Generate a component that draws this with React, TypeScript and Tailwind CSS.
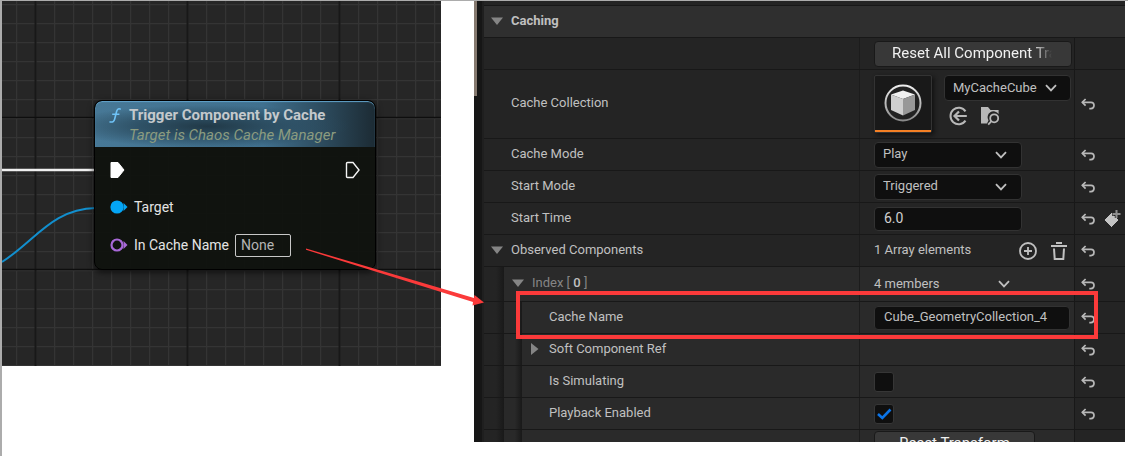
import type { ReactNode } from "react";

function UndoIcon() {
  return (
    <svg width="14" height="12" viewBox="0 0 14 12" fill="none" stroke="#b8b8b8" strokeWidth="1.7">
      <path d="M1 4.3H10C12 4.3 13 5.4 13 7.3C13 9.4 12 10.6 10 10.6H8.3" />
      <path d="M4.6 1L1.3 4.3L4.6 7.6" />
    </svg>
  );
}

function Chevron() {
  return (
    <svg className="pointer-events-none" width="12" height="8" viewBox="0 0 12 8" fill="none" stroke="#c0c0c0" strokeWidth="1.8">
      <path d="M1 1.2L6 6.4L11 1.2" />
    </svg>
  );
}

function Triangle({ open }: { open: boolean }) {
  return open ? (
    <svg width="12" height="8" viewBox="0 0 12 8" fill="#858585">
      <path d="M0 0.5H12L6 8Z" />
    </svg>
  ) : (
    <svg width="12" height="12" viewBox="0 0 12 12" fill="#858585">
      <path d="M2 0L9.5 6L2 12Z" />
    </svg>
  );
}

function ResetButton({ label }: { label: string }) {
  return (
    <button type="button" aria-label={`Reset ${label}`} className="pl-[6px]">
      <UndoIcon />
    </button>
  );
}

type RowProps = {
  name?: ReactNode;
  label?: string;
  children?: ReactNode;
  depth?: 0 | 1 | 2;
  open?: boolean;
  reset?: boolean;
  extra?: ReactNode;
  height?: string;
};

function Row({ name, label, children, depth = 0, open, reset = true, extra, height = "h-8" }: RowProps) {
  return (
    <div
      className={`${height} grid grid-cols-[minmax(0,1fr)_215px_50px] border-b border-[#181818] ${
        depth === 0 ? "bg-[#242424]" : "bg-[#2a2a2a]"
      }`}
    >
      <div className="flex min-w-0 border-r border-[#1c1c1c]">
        {depth > 0 && <div className="w-5 shrink-0 bg-linear-to-r from-[#242424] from-60% to-[#191919]" />}
        {depth > 1 && <div className="w-[18px] shrink-0 bg-linear-to-r from-[#292929] from-60% to-[#191919]" />}
        <div className={`flex items-center gap-2 pb-[2px] ${depth === 1 ? "pl-2" : "pl-[7px]"}`}>
          <span className="flex w-3 shrink-0 justify-center">{open !== undefined && <Triangle open={open} />}</span>
          {name}
        </div>
      </div>
      <div className="flex min-w-0 items-center border-r border-[#181818] pl-[14px]">{children}</div>
      <div className="flex items-center gap-2 bg-[#242424]">
        {reset && label && <ResetButton label={label} />}
        {extra}
      </div>
    </div>
  );
}

function Dropdown({ id, value, width, pad }: { id: string; value: string; width: string; pad: string }) {
  return (
    <div className={`relative flex h-[26px] items-center ${width}`}>
      <select
        id={id}
        defaultValue={value}
        className="h-full w-full appearance-none rounded-[4px] border border-[#323232] bg-[#0f0f0f] px-2 pb-px text-[13px] text-[#c0c0c0]"
      >
        <option>{value}</option>
      </select>
      <span className={`pointer-events-none absolute ${pad}`}>
        <Chevron />
      </span>
    </div>
  );
}

function CubeThumbnail() {
  return (
    <div className="flex h-[58px] w-[58px] flex-col items-center rounded-[2px] border border-[#333333] bg-[#191919] shadow-[2px_2px_4px_#111111]">
      <div className="flex flex-1 items-center">
        <svg width="40" height="40" viewBox="0 0 40 40">
          <defs>
            <linearGradient id="ring" x1="0" y1="0" x2="0" y2="1">
              <stop offset="0" stopColor="#eeeeee" />
              <stop offset="1" stopColor="#8a8a8a" />
            </linearGradient>
          </defs>
          <circle cx="20" cy="20" r="17.5" fill="#222222" stroke="url(#ring)" strokeWidth="2" />
          <path d="M20 7.5L32 11.5L20 16L8 11.5Z" fill="#f1f1f1" />
          <path d="M8 11.5L20 16V32.5L8 27Z" fill="#cfcfcf" />
          <path d="M32 11.5L20 16V32.5L32 27Z" fill="#989898" />
        </svg>
      </div>
      <div className="h-[2px] w-full bg-[#f58025]" />
    </div>
  );
}

function UseSelectedIcon() {
  return (
    <svg width="20" height="20" viewBox="0 0 20 20" fill="none" stroke="#b8b8b8" strokeWidth="2">
      <path d="M17.5 5.4A8.2 8.2 0 1 0 17.5 14.6" />
      <path d="M18.8 10H6.5M11 5.5L6.5 10L11 14.5" strokeWidth="2.2" />
    </svg>
  );
}

function BrowseIcon() {
  return (
    <svg width="20" height="20" viewBox="0 0 20 20">
      <path d="M1 1H8L10.5 4H18.6V8A6 6 0 0 0 8.5 14.5L7 17.5H1Z" fill="#b8b8b8" />
      <circle cx="14.2" cy="12.3" r="4" fill="#242424" stroke="#b8b8b8" strokeWidth="1.8" />
      <path d="M11.4 15.2L8.2 18.6" stroke="#b8b8b8" strokeWidth="1.8" />
    </svg>
  );
}

function AddIcon() {
  return (
    <svg width="18" height="18" viewBox="0 0 18 18" fill="none" stroke="#c0c0c0" strokeWidth="1.8">
      <circle cx="9" cy="9" r="8" />
      <path d="M9 5V13M5 9H13" />
    </svg>
  );
}

function TrashIcon() {
  return (
    <svg width="16" height="18" viewBox="0 0 16 18" fill="none" stroke="#c0c0c0" strokeWidth="2">
      <path d="M0 4H16M5 1H11M3 6.5L3.7 17H12.3L13 6.5" />
    </svg>
  );
}

function KeyframeIcon() {
  return (
    <svg width="18" height="20" viewBox="0 0 18 20">
      <path d="M8.5 3.5L16 11L8.5 18.5L1 11Z" fill="#c4c4c4" stroke="#111111" strokeWidth="0.8" />
      <path d="M13.5 0V9M9 5H18" stroke="#242424" strokeWidth="3.4" />
      <path d="M13.5 1V9M9.5 5H17.5" stroke="#8f8f8f" strokeWidth="2" />
    </svg>
  );
}

function Checkbox({ id, checked }: { id: string; checked: boolean }) {
  return (
    <span className="relative flex h-5 w-5">
      <input
        id={id}
        type="checkbox"
        defaultChecked={checked}
        className="peer h-5 w-5 appearance-none rounded-[3px] border border-[#363636] bg-[#0f0f0f]"
      />
      <svg
        className="pointer-events-none absolute inset-0 hidden peer-checked:block"
        width="20"
        height="20"
        viewBox="0 0 20 20"
        fill="none"
        stroke="#0b74e8"
        strokeWidth="2.6"
      >
        <path d="M4 10L8.3 14L16.5 5.5" />
      </svg>
    </span>
  );
}

function DetailsPanel() {
  return (
    <section className="flex overflow-hidden bg-[#161616] text-[13px] text-[#c0c0c0]">
      <div className="w-[10px] shrink-0 border-r-2 border-[#1f1f1f]">
        <div className="h-[95px] w-[3px] bg-[#85796f]" />
      </div>
      <div className="min-w-0 flex-1">
        <div className="h-[5px] border-b border-[#181818] bg-[#242424]" />
        <h2 className="flex h-8 items-center gap-2 border-b border-[#181818] bg-[#2f2f2f] pb-px pl-[7px] font-bold">
          <Triangle open />
          Caching
        </h2>
        <Row reset={false}>
          <button
            type="button"
            className="h-[26px] w-[198px] overflow-hidden rounded-[4px] border border-[#191919] bg-[#383838] pr-[19px] pl-[17px] text-left text-[15px] whitespace-nowrap text-[#f0f0f0]"
          >
            <span className="block overflow-hidden [mask-image:linear-gradient(to_right,#000_88%,#0000)]">
              Reset All Component Transforms
            </span>
          </button>
        </Row>
        <Row name={<label htmlFor="collection">Cache Collection</label>} label="Cache Collection" height="h-[69px]">
          <div className="flex gap-3">
            <CubeThumbnail />
            <div className="flex flex-col gap-[5px]">
              <Dropdown id="collection" value="MyCacheCube" width="w-[127px]" pad="right-[14px]" />
              <div className="flex gap-3 pl-1">
                <button type="button" aria-label="Use selected asset">
                  <UseSelectedIcon />
                </button>
                <button type="button" aria-label="Browse to asset">
                  <BrowseIcon />
                </button>
              </div>
            </div>
          </div>
        </Row>
        <Row name={<label htmlFor="mode">Cache Mode</label>} label="Cache Mode">
          <Dropdown id="mode" value="Play" width="w-[148px]" pad="right-[15px]" />
        </Row>
        <Row name={<label htmlFor="start">Start Mode</label>} label="Start Mode">
          <Dropdown id="start" value="Triggered" width="w-[148px]" pad="right-[15px]" />
        </Row>
        <Row
          name={<label htmlFor="time">Start Time</label>}
          label="Start Time"
          extra={
            <button type="button" aria-label="Add keyframe">
              <KeyframeIcon />
            </button>
          }
        >
          <input
            id="time"
            defaultValue="6.0"
            className="h-6 w-[148px] rounded-[4px] border border-[#323232] bg-[#0f0f0f] px-[9px] pb-[2px] text-[14px] text-[#d0d0d0]"
          />
        </Row>
        <Row name="Observed Components" label="Observed Components" open>
          <span className="flex-1 pb-[2px]">1 Array elements</span>
          <div className="flex gap-[14px] pr-[7px]">
            <button type="button" aria-label="Add element">
              <AddIcon />
            </button>
            <button type="button" aria-label="Remove all elements">
              <TrashIcon />
            </button>
          </div>
        </Row>
        <Row
          name={
            <span className="text-[#858585]">
              Index [ <span className="font-medium text-[#c0c0c0]">0</span> ]
            </span>
          }
          label="Index 0"
          depth={1}
          open
          height="h-[35px]"
        >
          <button type="button" className="flex w-[136px] items-center justify-between">
            4 members
            <Chevron />
          </button>
        </Row>
        <div className="relative">
          <Row name={<label htmlFor="cache-name">Cache Name</label>} label="Cache Name" depth={2}>
            <input
              id="cache-name"
              defaultValue="Cube_GeometryCollection_4"
              className="h-6 w-[196px] rounded-[4px] border border-[#323232] bg-[#0f0f0f] px-[9px] pb-[3px] text-[#c0c0c0]"
            />
          </Row>
          <div className="pointer-events-none absolute -top-[11px] -bottom-[5px] left-8 right-[27px] border-4 border-[#fb3a3a]" />
        </div>
        <Row name="Soft Component Ref" label="Soft Component Ref" depth={2} open={false} />
        <Row name={<label htmlFor="simulating">Is Simulating</label>} label="Is Simulating" depth={2}>
          <Checkbox id="simulating" checked={false} />
        </Row>
        <Row name={<label htmlFor="playback">Playback Enabled</label>} label="Playback Enabled" depth={2}>
          <Checkbox id="playback" checked />
        </Row>
        <div className="h-3 overflow-hidden">
          <Row depth={2} reset={false} height="h-7">
            <button
              type="button"
              className="h-[26px] w-[161px] rounded-[4px] border border-[#191919] bg-[#383838] pb-[2px] text-[15px] text-[#f0f0f0]"
            >
              Reset Transform
            </button>
          </Row>
        </div>
      </div>
    </section>
  );
}

function GraphNode() {
  return (
    <div className="absolute top-[99px] left-[92px] w-[282px] overflow-hidden rounded-[8px] border border-black bg-[#10130ff5] text-[14px] text-[#e4e4e4] shadow-[0_2px_6px_#000000b0]">
      <header className="flex h-[46px] gap-2 rounded-t-[7px] bg-[radial-gradient(ellipse_at_40%_55%,#213947_0%,#2a4a5dcc_30%,transparent_60%),linear-gradient(to_right,#477896,#40708e_60%,#1c2b34)] pt-1 pl-[14px] shadow-[inset_0_1px_1px_#62a4cb]">
        <svg className="mt-[3px]" width="12" height="15" viewBox="0 0 12 15" fill="none" stroke="#6fc3f7" strokeWidth="1.6">
          <path d="M11.8 1.2C9.4 0.2 8.2 1 7.5 3.8L5.7 11C5 13.7 3.5 14.6 0.5 13.7M3.2 6.2H10.4" />
        </svg>
        <div>
          <h3 className="text-[15px] leading-5 font-bold text-[#c4c9cc]">Trigger Component by Cache</h3>
          <p className="text-[15px] leading-5 text-[#8b9b7f] italic">Target is Chaos Cache Manager</p>
        </div>
      </header>
      <div className="flex h-[46px] items-center justify-between px-[15px]">
        <svg width="15" height="18" viewBox="0 0 15 18">
          <path d="M1 1.5H8L14 9L8 16.5H1Z" fill="#ffffff" stroke="#ffffff" strokeLinejoin="round" />
        </svg>
        <svg width="15" height="18" viewBox="0 0 15 18">
          <path d="M1.5 2.5Q1.5 1.5 2.5 1.5H8L14 9L8 16.5H2.5Q1.5 16.5 1.5 15.5Z" fill="none" stroke="#f4f4f4" strokeWidth="1.4" />
        </svg>
      </div>
      <div className="flex h-7 items-center gap-[6px] pl-[15px]">
        <svg width="18" height="14" viewBox="0 0 18 14" fill="#04a5f5">
          <circle cx="7" cy="7" r="6.6" />
          <path d="M13.5 3L17.5 7L13.5 11Z" />
        </svg>
        Target
      </div>
      <div className="flex h-12 items-center gap-[6px] pl-[15px]">
        <svg width="18" height="14" viewBox="0 0 18 14">
          <circle cx="7" cy="7" r="5.5" fill="none" stroke="#a868d8" strokeWidth="2.2" />
          <path d="M13.5 3L17.5 7L13.5 11Z" fill="#a868d8" />
        </svg>
        <label htmlFor="node-cache">In Cache Name</label>
        <input
          id="node-cache"
          defaultValue="None"
          className="h-[23px] w-14 rounded-[2px] border border-[#c8c8c8] bg-transparent px-[5px] text-[#b4b4b4]"
        />
      </div>
    </div>
  );
}

function GraphPanel() {
  return (
    <section className="relative h-[365px] overflow-hidden bg-[#262626]">
      <svg className="absolute inset-0" width="100%" height="100%">
        <defs>
          <pattern id="minor" width="19" height="19" x="14" y="3" patternUnits="userSpaceOnUse">
            <path d="M0 0.5H19M0.5 0V19" stroke="#343434" strokeWidth="1.4" />
          </pattern>
          <pattern id="major" width="152" height="152" x="32" y="115" patternUnits="userSpaceOnUse">
            <path d="M1.5 0V152" stroke="#181818" strokeWidth="2" />
            <path d="M0 1.5H152" stroke="#0e0e0e" strokeWidth="1.4" />
          </pattern>
        </defs>
        <rect width="100%" height="100%" fill="url(#minor)" />
        <rect width="100%" height="100%" fill="url(#major)" />
        <path d="M0 169H94" stroke="#f0f0f0" strokeWidth="2.6" />
        <path d="M0 261C34 239 50 208 94 207" fill="none" stroke="#128fce" strokeWidth="2" />
      </svg>
      <GraphNode />
    </section>
  );
}

export default function App() {
  return (
    <main className="relative grid min-h-screen grid-cols-[minmax(0,439fr)_33px_minmax(0,651fr)_3px] items-start border-t border-l-2 border-[#acacac] bg-white font-['Roboto',sans-serif]">
      <GraphPanel />
      <div />
      <DetailsPanel />
      <svg className="pointer-events-none absolute top-[245px] left-[302px]" width="184" height="66" viewBox="0 0 184 66">
        <path d="M2 2.5L2 3.8L169 56L168.5 59.5L180 56.5L170.5 49L170 52Z" fill="#fb3a3a" />
      </svg>
    </main>
  );
}
